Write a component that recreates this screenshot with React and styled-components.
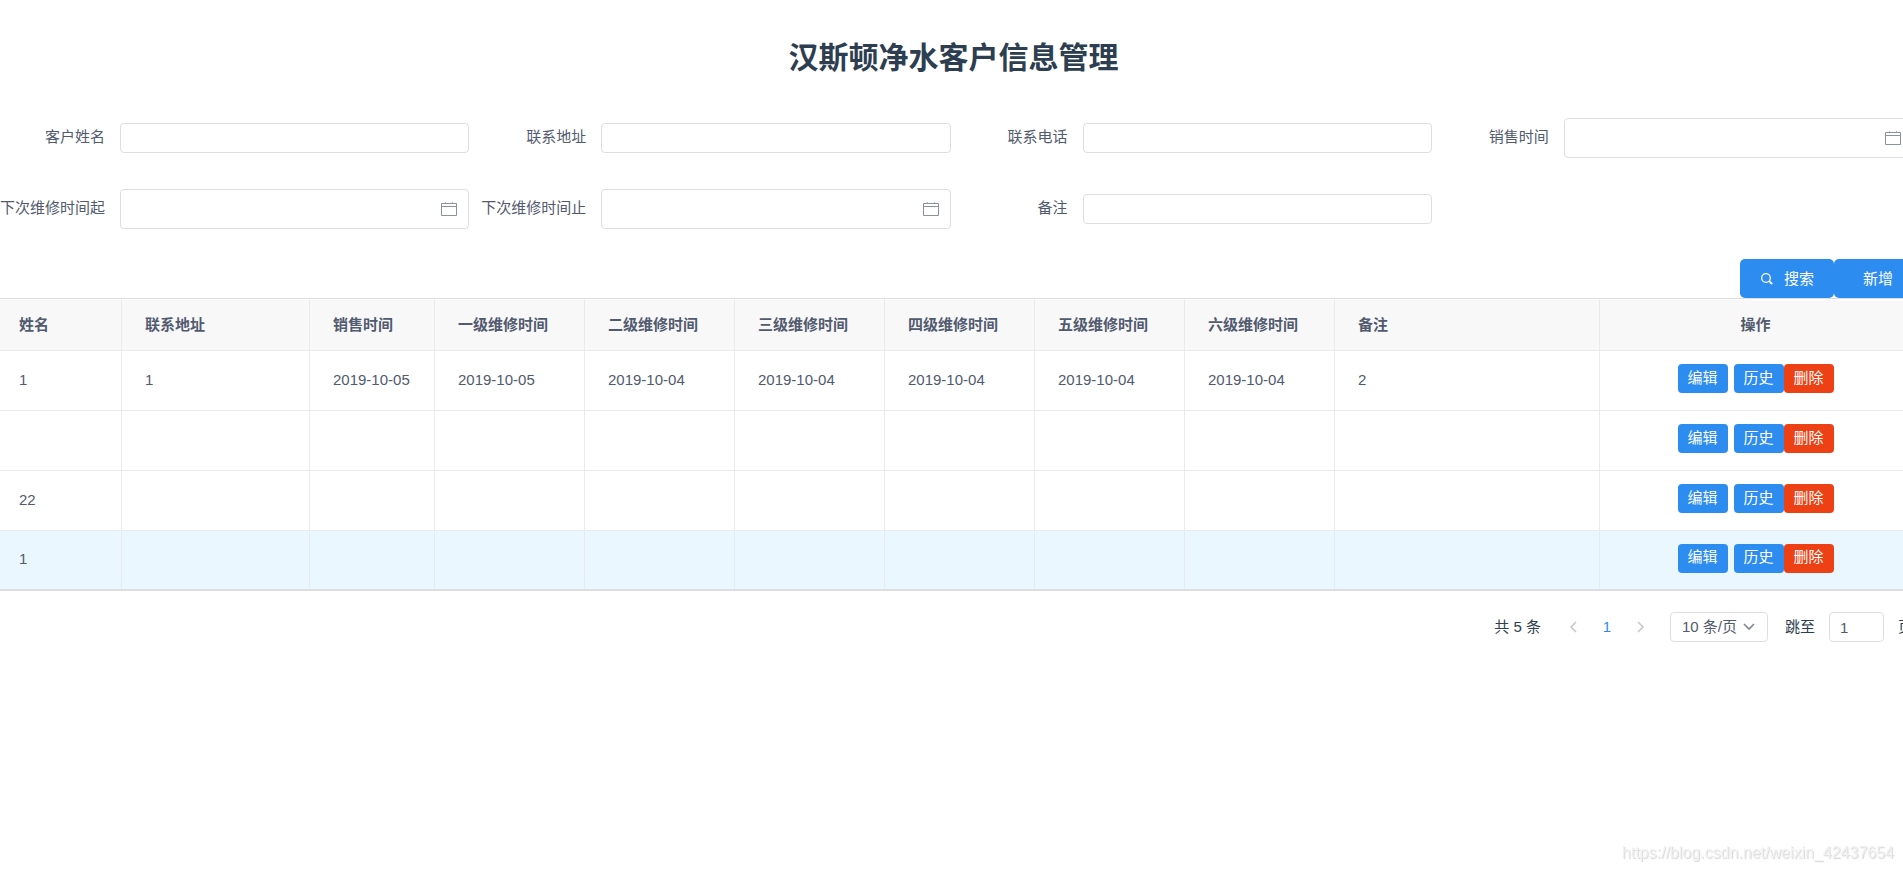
import React, { useState } from 'react';
import styled, { createGlobalStyle } from 'styled-components';

const GlobalStyle = createGlobalStyle`
  * {
    box-sizing: border-box;
  }

  body {
    margin: 0;
    background-color: #fff;
    color: #515a6e;
    font-family: 'Liberation Sans', Arial, 'Noto Sans CJK SC', sans-serif;
    font-size: 15px;
    line-height: 20px;
  }

  button, input, select {
    font: inherit;
  }
`;

const Page = styled.div`
  min-height: 100vh;
  overflow-x: hidden;
`;

const Title = styled.h1`
  margin: 0;
  padding: 38px 0 40px 4px;
  color: #2c3e50;
  font-size: 30px;
  line-height: 40px;
  text-align: center;
`;

const SearchForm = styled.form`
  width: calc(100% + 22px);
`;

const Fields = styled.div`
  display: grid;
  grid-template-columns: repeat(4, 1fr);
  row-gap: 31px;
`;

const Field = styled.div`
  display: flex;
  align-items: center;
  height: 40px;
  padding-right: 12px;
`;

const Label = styled.label`
  flex: none;
  width: 120px;
  padding: 0 15px 2px 0;
  text-align: right;
  white-space: nowrap;
`;

const InputWrap = styled.div`
  display: flex;
  flex: 1;
  align-items: center;
  height: ${props => props.$date ? '40px' : '30px'};
  padding-right: 11px;
  border: 1px solid #dcdee2;
  border-radius: 4px;
  color: #8a91a0;
`;

const TextInput = styled.input`
  flex: 1;
  min-width: 0;
  height: 100%;
  padding: 0 8px;
  border: none;
  outline: none;
  background: transparent;
  color: #515a6e;
`;

const Actions = styled.div`
  display: flex;
  justify-content: flex-end;
  margin-top: 30px;
  padding-right: 12px;
`;

const Button = styled.button`
  display: flex;
  align-items: center;
  gap: 10px;
  height: 39px;
  padding: 0 20px;
  padding-left: ${props => props.$plain ? '29px' : '20px'};
  border: none;
  border-radius: 5px;
  background-color: #2d8cf0;
  color: #fff;
  cursor: pointer;
`;

const Table = styled.table`
  width: calc(100% + 9px);
  table-layout: fixed;
  border-collapse: separate;
  border-spacing: 0;
  border-top: 1px solid #dcdee2;
  border-bottom: 2px solid #dcdee2;
`;

const Th = styled.th`
  height: 52px;
  padding: 0 0 0 23px;
  border-top: 1px solid #fff;
  border-right: 1px solid #e8eaec;
  border-bottom: 1px solid #e8eaec;
  background-color: #f8f8f9;
  text-align: ${props => props.$center ? 'center' : 'left'};

  &:first-child {
    padding-left: 19px;
  }

  &:last-child {
    padding-left: 0;
  }
`;

const Tr = styled.tr`
  background-color: ${props => props.$active ? '#ebf7ff' : '#fff'};

  &:last-child td {
    height: 58px;
    border-bottom: none;
  }
`;

const Td = styled.td`
  height: 60px;
  padding: 0 0 2px 23px;
  border-right: 1px solid #e8eaec;
  border-bottom: 1px solid #e8eaec;

  &:first-child {
    padding-left: 19px;
  }

  &:last-child {
    padding-left: 0;
  }
`;

const RowActions = styled.div`
  display: flex;
  justify-content: center;
  padding-bottom: 2px;
`;

const SmallButton = styled.button`
  width: 50px;
  height: 29px;
  margin-right: ${props => props.$spaced ? '6px' : '0'};
  padding: 0 0 2px;
  border: none;
  border-radius: 4px;
  background-color: ${props => props.$danger ? '#ed4014' : '#2d8cf0'};
  color: #fff;
  cursor: pointer;
`;

const Pager = styled.nav`
  display: flex;
  align-items: center;
  justify-content: flex-end;
  width: calc(100% + 10px);
  margin-top: 21px;
  color: #2c3e50;
  white-space: nowrap;
`;

const PagerButton = styled.button`
  display: flex;
  align-items: center;
  justify-content: center;
  width: 34px;
  height: 30px;
  padding: 0;
  border: none;
  background: none;
  color: ${props => props.$current ? '#2d8cf0' : '#c5c8ce'};
  cursor: pointer;
`;

const PageButtons = styled.div`
  display: flex;
  margin: 0 12px 0 15px;
`;

const SelectWrap = styled.div`
  position: relative;
  margin-right: 17px;
  color: #808695;

  svg {
    position: absolute;
    top: 9px;
    right: 13px;
    pointer-events: none;
  }
`;

const Select = styled.select`
  width: 98px;
  height: 30px;
  padding: 0 24px 0 11px;
  border: 1px solid #dcdee2;
  border-radius: 4px;
  background-color: #fff;
  color: #515a6e;
  appearance: none;
`;

const Jump = styled.label`
  display: flex;
  align-items: center;
  gap: 14px;
`;

const JumpInput = styled.input`
  width: 55px;
  height: 30px;
  padding: 0 10px;
  border: 1px solid #dcdee2;
  border-radius: 4px;
  color: #515a6e;
`;

const Watermark = styled.div`
  position: fixed;
  right: 9px;
  bottom: 7px;
  color: #f2f2f2;
  font-size: 16px;
  text-shadow: 1px 1px 1px #d4d4d4;
`;

const CalendarIcon = () => (
  <svg width="16" height="16" viewBox="0 0 16 16" fill="none" stroke="currentColor" aria-hidden="true">
    <path d="M.5 2.5h15v12H.5zM.5 5.5h15" />
    <path d="M4.5 1v2M11.5 1v2" opacity=".7" />
  </svg>
);

const SearchIcon = () => (
  <svg width="14" height="14" viewBox="0 0 14 14" fill="none" stroke="currentColor" aria-hidden="true">
    <circle cx="6" cy="6" r="4.3" strokeWidth="1.3" />
    <path d="M9.2 9.2l3 3" strokeWidth="1.9" />
  </svg>
);

const Chevron = ({ d, width, height }) => (
  <svg width={width} height={height} viewBox={`0 0 ${width} ${height}`} fill="none" stroke="currentColor" strokeWidth="1.6" aria-hidden="true">
    <path d={d} />
  </svg>
);

const fields = [
  { name: 'name', label: '客户姓名' },
  { name: 'address', label: '联系地址' },
  { name: 'phone', label: '联系电话' },
  { name: 'saleDate', label: '销售时间', date: true },
  { name: 'nextStart', label: '下次维修时间起', date: true },
  { name: 'nextEnd', label: '下次维修时间止', date: true },
  { name: 'remark', label: '备注' },
];

const columns = [
  { title: '姓名', width: 122 },
  { title: '联系地址', width: 188 },
  { title: '销售时间', width: 125 },
  { title: '一级维修时间', width: 150 },
  { title: '二级维修时间', width: 150 },
  { title: '三级维修时间', width: 150 },
  { title: '四级维修时间', width: 150 },
  { title: '五级维修时间', width: 150 },
  { title: '六级维修时间', width: 150 },
  { title: '备注', width: 265 },
];

const rows = [
  ['1', '1', '2019-10-05', '2019-10-05', '2019-10-04', '2019-10-04', '2019-10-04', '2019-10-04', '2019-10-04', '2'],
  ['', '', '', '', '', '', '', '', '', ''],
  ['22', '', '', '', '', '', '', '', '', ''],
  ['1', '', '', '', '', '', '', '', '', ''],
];

function App() {
  const [values, setValues] = useState({});
  const [activeRow, setActiveRow] = useState(3);
  const [jumpPage, setJumpPage] = useState('1');

  return (
    <Page>
      <GlobalStyle />
      <Title>汉斯顿净水客户信息管理</Title>
      <SearchForm onSubmit={e => e.preventDefault()}>
        <Fields>
          {fields.map(field => (
            <Field key={field.name}>
              <Label htmlFor={field.name}>{field.label}</Label>
              <InputWrap $date={field.date}>
                <TextInput
                  id={field.name}
                  value={values[field.name] || ''}
                  onChange={e => setValues({ ...values, [field.name]: e.target.value })}
                />
                {field.date && <CalendarIcon />}
              </InputWrap>
            </Field>
          ))}
        </Fields>
        <Actions>
          <Button type="submit"><SearchIcon />搜索</Button>
          <Button type="button" $plain>新增</Button>
        </Actions>
      </SearchForm>

      <Table>
        <colgroup>
          {columns.map(col => <col key={col.title} width={col.width} />)}
          <col />
        </colgroup>
        <thead>
          <tr>
            {columns.map(col => <Th key={col.title}>{col.title}</Th>)}
            <Th $center>操作</Th>
          </tr>
        </thead>
        <tbody>
          {rows.map((row, i) => (
            <Tr key={i} $active={i === activeRow} onMouseEnter={() => setActiveRow(i)}>
              {row.map((cell, j) => <Td key={j}>{cell}</Td>)}
              <Td>
                <RowActions>
                  <SmallButton type="button" $spaced>编辑</SmallButton>
                  <SmallButton type="button">历史</SmallButton>
                  <SmallButton type="button" $danger>删除</SmallButton>
                </RowActions>
              </Td>
            </Tr>
          ))}
        </tbody>
      </Table>

      <Pager aria-label="分页">
        <span>共 5 条</span>
        <PageButtons>
          <PagerButton type="button" aria-label="上一页">
            <Chevron width={8} height={12} d="M7 1L2 6l5 5" />
          </PagerButton>
          <PagerButton type="button" $current>1</PagerButton>
          <PagerButton type="button" aria-label="下一页">
            <Chevron width={8} height={12} d="M1 1l5 5-5 5" />
          </PagerButton>
        </PageButtons>
        <SelectWrap>
          <Select aria-label="每页条数" defaultValue="10">
            <option value="10">10 条/页</option>
            <option value="20">20 条/页</option>
          </Select>
          <Chevron width={12} height={12} d="M1 3l5 5 5-5" />
        </SelectWrap>
        <Jump>
          跳至
          <JumpInput value={jumpPage} onChange={e => setJumpPage(e.target.value)} />
          页
        </Jump>
      </Pager>

      <Watermark>https://blog.csdn.net/weixin_42437654</Watermark>
    </Page>
  );
}

export default App;
